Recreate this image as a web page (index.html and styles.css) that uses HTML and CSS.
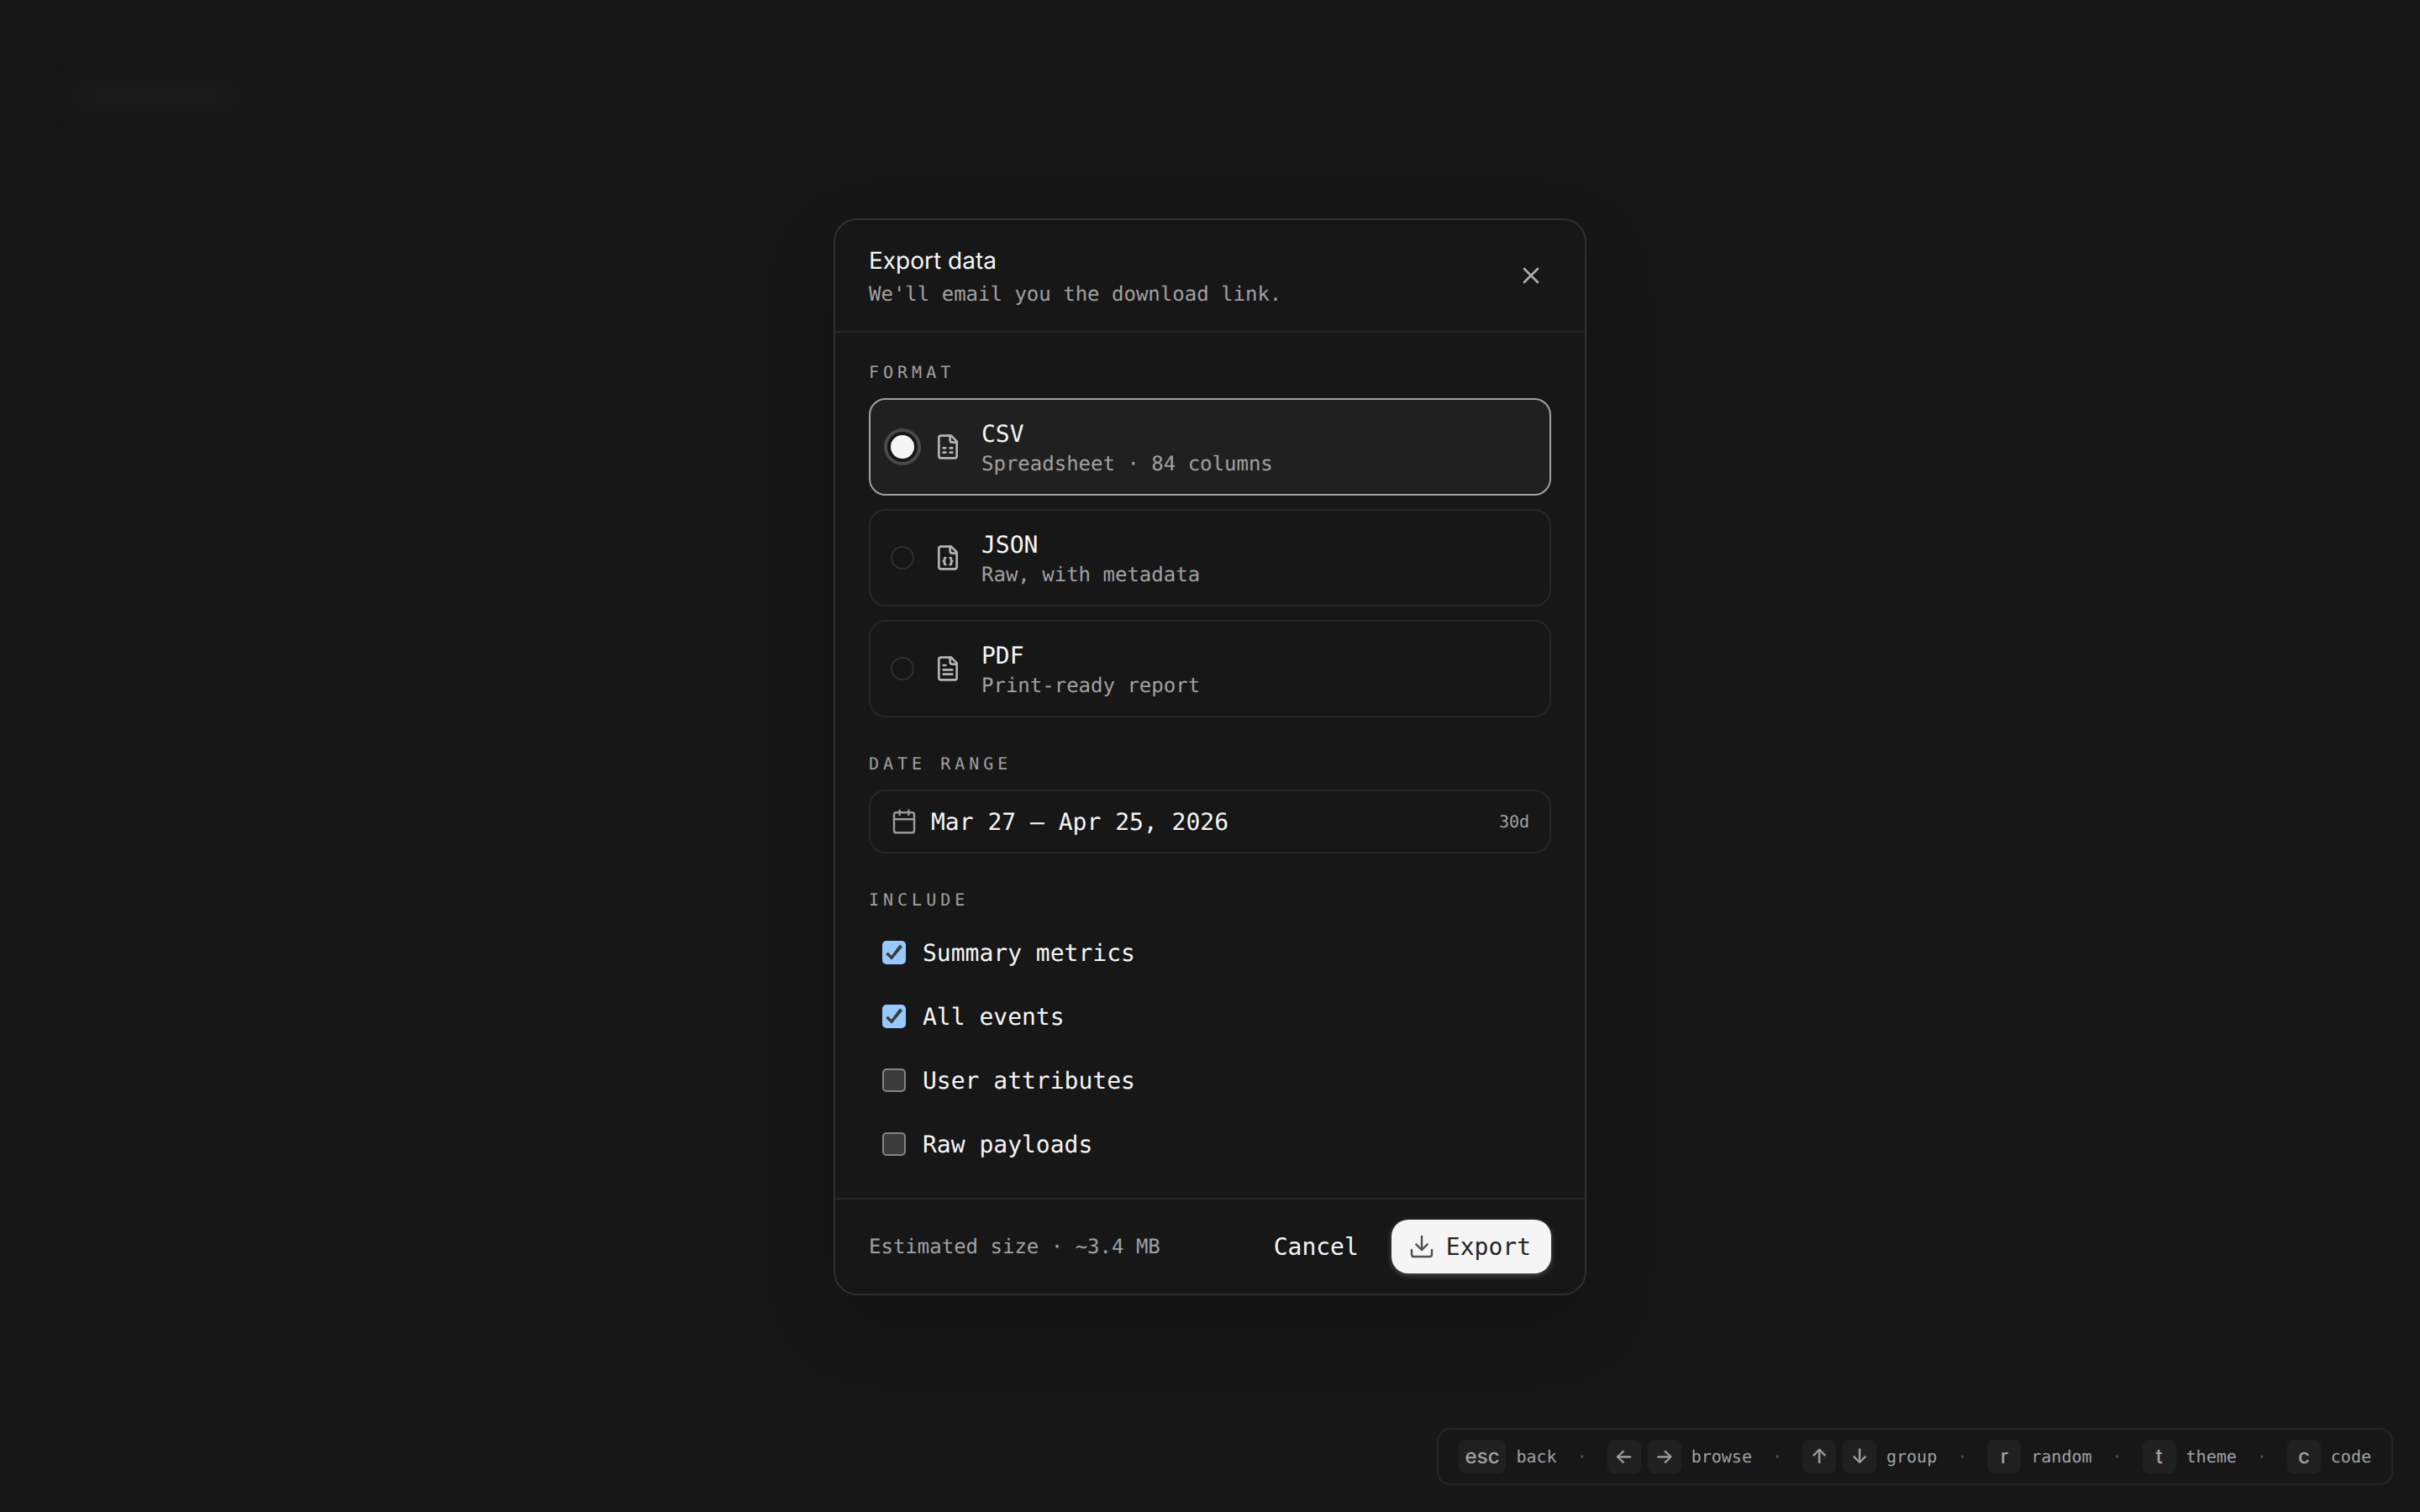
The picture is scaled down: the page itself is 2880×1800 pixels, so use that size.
FILE: index.html
```html
<!DOCTYPE html>
<html lang="en">
<head>
<meta charset="utf-8">
<title>Export data</title>
<link rel="stylesheet" href="styles.css">
</head>
<body>
<div class="backdrop-heading"></div>
<main class="stage">
  <section class="modal" role="dialog" aria-label="Export data">
    <header class="modal-head">
      <div>
        <h1 class="title">Export data</h1>
        <p class="subtitle">We'll email you the download link.</p>
      </div>
      <button class="close" aria-label="Close">
        <svg class="icon" viewBox="0 0 24 24"><path d="M18 6 6 18M6 6l12 12"/></svg>
      </button>
    </header>
    <div class="modal-body">
      <section class="group">
        <h2 class="label">FORMAT</h2>
        <div class="options">
          <div class="option selected">
            <span class="radio on"></span>
            <svg class="icon file" viewBox="0 0 24 24"><path d="M15 2H6a2 2 0 0 0-2 2v16a2 2 0 0 0 2 2h12a2 2 0 0 0 2-2V7Z"/><path d="M14 2v4a2 2 0 0 0 2 2h4"/><path d="M8 13h2M14 13h2M8 17h2M14 17h2"/></svg>
            <div><div class="name">CSV</div><div class="desc">Spreadsheet · 84 columns</div></div>
          </div>
          <div class="option">
            <span class="radio"></span>
            <svg class="icon file" viewBox="0 0 24 24"><path d="M15 2H6a2 2 0 0 0-2 2v16a2 2 0 0 0 2 2h12a2 2 0 0 0 2-2V7Z"/><path d="M14 2v4a2 2 0 0 0 2 2h4"/><path d="M10 12a1 1 0 0 0-1 1v1a1 1 0 0 1-1 1 1 1 0 0 1 1 1v1a1 1 0 0 0 1 1"/><path d="M14 18a1 1 0 0 0 1-1v-1a1 1 0 0 1 1-1 1 1 0 0 1-1-1v-1a1 1 0 0 0-1-1"/></svg>
            <div><div class="name">JSON</div><div class="desc">Raw, with metadata</div></div>
          </div>
          <div class="option">
            <span class="radio"></span>
            <svg class="icon file" viewBox="0 0 24 24"><path d="M15 2H6a2 2 0 0 0-2 2v16a2 2 0 0 0 2 2h12a2 2 0 0 0 2-2V7Z"/><path d="M14 2v4a2 2 0 0 0 2 2h4"/><path d="M10 9H8M16 13H8M16 17H8"/></svg>
            <div><div class="name">PDF</div><div class="desc">Print-ready report</div></div>
          </div>
        </div>
      </section>
      <section class="group">
        <h2 class="label">DATE RANGE</h2>
        <div class="range">
          <svg class="icon" viewBox="0 0 24 24"><path d="M8 2v4M16 2v4M3 10h18"/><rect x="3" y="4" width="18" height="18" rx="2"/></svg>
          <span class="dates text">Mar 27 – Apr 25, 2026</span>
          <span class="days">30d</span>
        </div>
      </section>
      <section class="group">
        <h2 class="label">INCLUDE</h2>
        <div class="checks">
          <div class="check"><span class="box on"><svg viewBox="0 0 28 28"><path d="M4.2 16 6.8 13.5 10.9 17.7 20.8 4.4 24.1 7 11.3 22.8Z"/></svg></span><span class="text">Summary metrics</span></div>
          <div class="check"><span class="box on"><svg viewBox="0 0 28 28"><path d="M4.2 16 6.8 13.5 10.9 17.7 20.8 4.4 24.1 7 11.3 22.8Z"/></svg></span><span class="text">All events</span></div>
          <div class="check"><span class="box"></span><span class="text">User attributes</span></div>
          <div class="check"><span class="box"></span><span class="text">Raw payloads</span></div>
        </div>
      </section>
    </div>
    <footer class="modal-foot">
      <span class="estimate">Estimated size · ~3.4 MB</span>
      <div class="actions">
        <button class="btn"><span class="text">Cancel</span></button>
        <button class="btn primary"><svg class="icon" viewBox="0 0 24 24"><path d="M12 15V3M7 10l5 5 5-5M21 15v4a2 2 0 0 1-2 2H5a2 2 0 0 1-2-2v-4"/></svg><span class="text">Export</span></button>
      </div>
    </footer>
  </section>
</main>
<nav class="hints">
  <div class="hint"><kbd>esc</kbd><span>back</span></div>
  <span class="sep">·</span>
  <div class="hint"><div class="keys"><kbd>←</kbd><kbd>→</kbd></div><span>browse</span></div>
  <span class="sep">·</span>
  <div class="hint"><div class="keys"><kbd>↑</kbd><kbd>↓</kbd></div><span>group</span></div>
  <span class="sep">·</span>
  <div class="hint"><kbd>r</kbd><span>random</span></div>
  <span class="sep">·</span>
  <div class="hint"><kbd>t</kbd><span>theme</span></div>
  <span class="sep">·</span>
  <div class="hint"><kbd>c</kbd><span>code</span></div>
</nav>
</body>
</html>
```
FILE: styles.css
```css
:root {
  --bg: #171717;
  --line: #262626;
  --line-strong: #303030;
  --muted: #a1a1a1;
  --text: #f5f5f5;
  --mono: "DejaVu Sans Mono", monospace;
  --sans: Inter, sans-serif;
}
* { box-sizing: border-box; margin: 0; padding: 0; }
body {
  height: 1800px;
  overflow: hidden;
  background: var(--bg);
  color: var(--text);
  font: 28px/40px var(--mono);
  text-rendering: geometricPrecision;
}
button { background: none; border: 0; color: inherit; font: inherit; }
.backdrop-heading {
  position: absolute;
  left: 88px;
  top: 100px;
  width: 192px;
  height: 28px;
  background: #1b1b1b;
  filter: blur(13px);
}
.stage {
  height: 1802px;
  display: flex;
  align-items: center;
  justify-content: center;
}
.modal {
  position: relative;
  width: 896px;
  background: var(--bg);
  border: 2px solid var(--line-strong);
  border-radius: 28px;
  box-shadow: 0 32px 96px -16px rgba(0, 0, 0, .3);
}
.icon {
  width: 32px;
  height: 32px;
  flex: none;
  fill: none;
  stroke: currentColor;
  stroke-width: 1.85;
  stroke-linecap: round;
  stroke-linejoin: round;
}
.text { padding-top: 2px; }
.modal-head {
  display: flex;
  justify-content: space-between;
  align-items: center;
  padding: 28px 40px;
  border-bottom: 2px solid var(--line);
}
.title { font: 400 28px/40px var(--sans); }
.subtitle { margin-top: 4px; font-size: 24px; line-height: 32px; color: var(--muted); }
.close { width: 48px; height: 48px; padding: 8px; color: #ababab; display: flex; }
.close .icon, .file { stroke-width: 2; }
.modal-body { display: flex; flex-direction: column; gap: 40px; padding: 32px 40px; }
.label {
  margin-bottom: 16px;
  font-size: 20px;
  line-height: 30px;
  font-weight: 400;
  letter-spacing: 5px;
  color: var(--muted);
}
.options { display: flex; flex-direction: column; gap: 16px; }
.option {
  display: flex;
  align-items: center;
  gap: 24px;
  height: 116px;
  padding: 0 24px;
  border: 2px solid var(--line);
  border-radius: 20px;
}
.option.selected { background: #202020; border-color: var(--muted); }
.radio { width: 28px; height: 28px; border: 2px solid #2e2e2e; border-radius: 50%; }
.radio.on {
  background: var(--text);
  border-color: var(--text);
  box-shadow: 0 0 0 4px var(--bg), 0 0 0 8px #4a4a4a;
}
.file { color: #b3b3b3; }
.name { height: 40px; line-height: 42px; }
.desc { font-size: 24px; line-height: 32px; color: var(--muted); }
.range {
  display: flex;
  align-items: center;
  height: 76px;
  padding: 0 24px;
  border: 2px solid var(--line);
  border-radius: 20px;
}
.range .icon { color: #9a9a9a; }
.dates { flex: 1; margin-left: 16px; }
.days { font-size: 20px; color: var(--muted); }
.checks { display: flex; flex-direction: column; gap: 12px; }
.check { display: flex; align-items: center; gap: 20px; height: 64px; padding: 0 16px; }
.box { width: 28px; height: 28px; background: #3b3b3b; border: 2px solid #858585; border-radius: 5px; }
.box.on { background: #99c8ff; border: 0; }
.box svg { display: block; fill: #3b3b3b; }
.modal-foot {
  display: flex;
  justify-content: space-between;
  align-items: center;
  padding: 24px 40px;
  border-top: 2px solid var(--line);
}
.estimate { font-size: 24px; color: var(--muted); }
.actions { display: flex; gap: 15px; }
.btn { display: flex; align-items: center; gap: 13px; height: 64px; padding: 0 24px; border-radius: 20px; }
.primary {
  padding-left: 20px;
  background: var(--text);
  color: #262626;
  box-shadow: 0 2px 6px rgba(255, 255, 255, .25);
}
.primary .icon { color: #525252; }
.hints {
  position: absolute;
  right: 32px;
  bottom: 32px;
  display: flex;
  align-items: center;
  gap: 24px;
  height: 68px;
  padding: 0 24px;
  background: var(--bg);
  border: 2px solid var(--line);
  border-radius: 16px;
  font-size: 20px;
  color: var(--muted);
}
.hint { display: flex; align-items: center; gap: 12px; }
.keys { display: flex; gap: 8px; }
kbd {
  min-width: 40px;
  height: 40px;
  padding: 0 8px;
  background: #202020;
  border-radius: 8px;
  font: 500 24px/40px var(--sans);
  text-align: center;
}
.sep { color: #525252; }
```
